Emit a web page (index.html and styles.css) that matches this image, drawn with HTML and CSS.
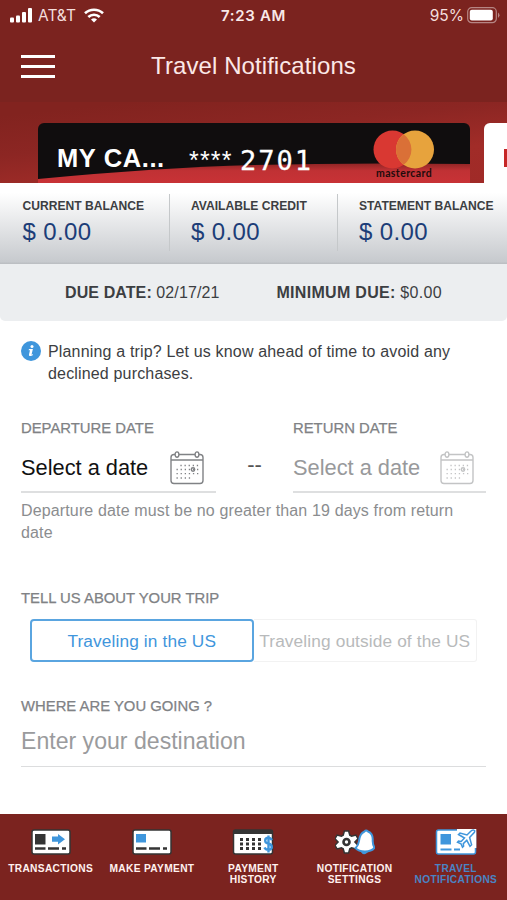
FILE: index.html
```html
<!DOCTYPE html>
<html lang="en">
<head>
<meta charset="utf-8">
<title>Travel Notifications</title>
<link rel="stylesheet" href="styles.css">
</head>
<body>
<svg width="0" height="0" class="defs" aria-hidden="true">
  <symbol id="calendar" viewBox="0 0 34 34">
    <g fill="none" stroke="currentColor" stroke-width="1.4">
      <path d="M5 3.5H4a3 3 0 0 0-3 3V29.5a3 3 0 0 0 3 3H30a3 3 0 0 0 3-3V6.500a3 3 0 0 0-3-3h-1M9 3.500h16M1 9h32"/>
      <ellipse cx="7" cy="3.600" rx="1.900" ry="2.700"/><ellipse cx="27" cy="3.600" rx="1.900" ry="2.700"/>
      <circle cx="23" cy="18.500" r="1.700"/>
    </g>
    <g stroke="currentColor" stroke-width="1.300" stroke-dasharray="1.300 2.800">
      <path d="M10.400 14.500h19M6.500 18.500h23M6.500 22.700h23M6.500 27h14"/>
    </g>
  </symbol>
</svg>
<div class="screen">
  <header class="top">
    <div class="status">
      <div class="carrier">
        <svg width="23" height="15" viewBox="0 0 23 15" fill="#fff"><rect y="9.500" width="4" height="5" rx="1"/><rect x="6" y="7.500" width="4" height="7" rx="1"/><rect x="12" y="4" width="4" height="10.500" rx="1"/><rect x="18" y="0" width="4" height="14.500" rx="1"/></svg>
        <span class="att">AT&amp;T</span>
        <svg width="20" height="15" viewBox="0 0 20 15" fill="none" stroke="#fff" stroke-width="2.600"><path d="M1 5.300a13 13 0 0 1 18 0M4.300 9a8.300 8.300 0 0 1 11.400 0"/><path d="M10 14.500l-3-3a4.500 4.500 0 0 1 6 0z" fill="#fff" stroke="none"/></svg>
      </div>
      <span class="time">7:23 AM</span>
      <div class="battery"><span>95%</span>
        <svg width="33" height="17" viewBox="0 0 33 17"><rect x=".7" y=".7" width="28.600" height="15" rx="4" fill="none" stroke="#b68583" stroke-width="1.200"/><rect x="2.800" y="2.800" width="23" height="10.600" rx="2" fill="#fff"/><path d="M31 5.500q3 2.700 0 5.400z" fill="#b68583"/></svg>
      </div>
    </div>
    <div class="nav">
      <div class="menu"><i></i><i></i><i></i></div>
      <h1>Travel Notifications</h1>
      <div></div>
    </div>
  </header>

  <section class="cards">
    <div class="card">
      <svg class="card-art" width="432" height="61" viewBox="0 0 432 61" preserveAspectRatio="none">
        <defs><linearGradient id="swoosh" x1="0" y1="0" x2="0" y2="1"><stop offset="0" stop-color="#8f2525"/><stop offset=".35" stop-color="#c03134"/><stop offset="1" stop-color="#c93236"/></linearGradient></defs>
        <path d="M0 56Q120 44.500 216 42T432 41V61H0z" fill="url(#swoosh)"/>
      </svg>
      <span class="card-name">MY CA...</span>
      <span class="stars">****</span>
      <span class="digits">2701</span>
      <div class="brand">
        <svg width="62" height="39" viewBox="0 0 62 39"><circle cx="19.500" cy="19.500" r="19" fill="#d93832"/><circle cx="42" cy="19.500" r="19" fill="#e7a33d"/><path d="M30.700 4.200a19 19 0 0 1 0 30.600a19 19 0 0 1 0-30.600" fill="#da7037"/></svg>
        <span>mastercard</span>
      </div>
    </div>
    <div class="card next"><i></i></div>
  </section>

  <section class="balances">
    <div><b>CURRENT BALANCE</b><span>$ 0.00</span></div>
    <div><b>AVAILABLE CREDIT</b><span>$ 0.00</span></div>
    <div><b>STATEMENT BALANCE</b><span>$ 0.00</span></div>
  </section>
  <section class="due">
    <span><b>DUE DATE:</b> 02/17/21</span>
    <span class="minimum"><b>MINIMUM DUE:</b> $0.00</span>
  </section>

  <main>
    <div class="info">
      <svg width="20" height="20" viewBox="0 0 20 20"><circle cx="10" cy="10" r="10" fill="#3f96dc"/><g fill="#fff"><circle cx="11" cy="5.400" r="1.500"/><path d="M8 8h3.900l-1.400 5.700 1.500-.6-.3 1.100c-1.500 1.200-4.200 1.100-3.700-.8L9 9.300l-1.400-.1z"/></g></svg>
      <p>Planning a trip? Let us know ahead of time to avoid any<br>declined purchases.</p>
    </div>
    <div class="dates">
      <div class="date">
        <label>DEPARTURE DATE</label>
        <div class="field"><span>Select a date</span><svg width="34" height="34"><use href="#calendar"/></svg></div>
      </div>
      <span class="dash">--</span>
      <div class="date off">
        <label>RETURN DATE</label>
        <div class="field"><span>Select a date</span><svg width="34" height="34"><use href="#calendar"/></svg></div>
      </div>
    </div>
    <p class="hint">Departure date must be no greater than 19 days from return<br>date</p>
    <label class="trip">TELL US ABOUT YOUR TRIP</label>
    <div class="segments"><span class="on">Traveling in the US</span><span>Traveling outside of the US</span></div>
    <label class="where">WHERE ARE YOU GOING ?</label>
    <div class="destination"><span>Enter your destination</span></div>
  </main>

  <nav class="tabs">
    <div class="tab"><svg width="40" height="26" viewBox="0 0 40 26"><rect x="1" y="1" width="38" height="24" rx="2" fill="#fff" stroke="#343434" stroke-width="1.500"/><path d="M4 5h10.500v10.500H4z" fill="#343434"/><path d="M21 7.500h6V5l7 5.200-7 5.200v-2.600h-6z" fill="#3f96dc"/><path d="M4 19.500h10.500M17 19.500h11M31 19.500h4" stroke="#343434" stroke-width="2.400"/></svg><span>TRANSACTIONS</span></div>
    <div class="tab"><svg width="40" height="26" viewBox="0 0 40 26"><rect x="1" y="1" width="38" height="24" rx="2" fill="#fff" stroke="#343434" stroke-width="1.500"/><path d="M4 5h10v8.500H4z" fill="#3f96dc"/><path d="M4 19.500h10.500M17 19.500h11M31 19.500h4" stroke="#343434" stroke-width="2.400"/></svg><span>MAKE PAYMENT</span></div>
    <div class="tab"><svg width="42" height="26" viewBox="0 0 42 26"><rect x="1.500" y="1" width="39" height="24" rx="2" fill="#fff" stroke="#343434" stroke-width="1.500"/><path d="M1.500 1h39v4h-39z" fill="#343434"/><path d="M8 10.500h21M8 15h21M8 19.500h21" stroke="#343434" stroke-width="3" stroke-dasharray="3 3"/><path d="M40 11Q38.500 8.800 36.500 8.800c-4.300 0-4.300 5-.5 5.700 5 .8 5 6.300.5 6.300q-3 0-4-2.300M36.500 6.500v17" fill="none" stroke="#3f96dc" stroke-width="2.400"/></svg><span>PAYMENT<br>HISTORY</span></div>
    <div class="tab"><svg width="40" height="26" viewBox="0 0 40 26"><path d="M9.400 2h4.200l1.200 4.200 1.800 1 4.300-1.100 2.100 3.600-3.100 3.300 3.100 3.300-2.100 3.600-4.300-1.100-1.800 1L13.600 24H9.400l-1.200-4.200-1.800-1-4.300 1.100L0 16.300 3.100 13 0 9.700l2.100-3.600 4.300 1.100 1.800-1z" fill="#fff" stroke="#343434" stroke-width="1.500"/><circle cx="11.500" cy="13" r="3" fill="#fff" stroke="#343434" stroke-width="2.600"/><path d="M29.500 2.500Q31 .5 33 2.500c3.700 1.500 5 5 4.700 9-.1 3 .6 5 1.800 7.200-2 2.800-7 3.800-9.500 3.800-3 0-7.500-1-9.500-3.300 2-2 3.200-4.300 3.500-7.200.5-5 2-8 5.500-9.500z" fill="#fff" stroke="#3f96dc" stroke-width="2"/><path d="M27 23q2 3 5 0z" fill="#3f96dc" stroke="#3f96dc" stroke-width="1.500"/></svg><span>NOTIFICATION<br>SETTINGS</span></div>
    <div class="tab active"><svg width="42" height="26" viewBox="0 0 42 26"><rect x="1.500" y="1" width="39" height="24" rx="2" fill="#fff" stroke="#3f96dc" stroke-width="1.500"/><path d="M5.500 5h10.500v10.500H5.500z" fill="#3f96dc"/><path d="M5.500 20.500h11M19 20.500h6" stroke="#3f96dc" stroke-width="2.200"/><path d="M22 0h19.300v19H22z" fill="#fff"/><path d="M39.500 1.500c-1.500-1-3 0-4 1L32 6l-7-2-1.500 1.500 6 3.500-3.300 3.500-2.700-.4-1 1.100 3.500 1.600 1.500 3.400 1.100-1-.3-2.600 3.500-3.300 3.200 6 1.600-1.500-2-7.300 3.200-3.500c1.200-1.200 2.600-2.300 1.700-3.500z" fill="#fff" stroke="#3f96dc" stroke-width="1.500"/></svg><span>TRAVEL<br>NOTIFICATIONS</span></div>
  </nav>
</div>
</body>
</html>
```
FILE: styles.css
```css
* { box-sizing: border-box; }
body { margin: 0; background: #fff; font-family: "Liberation Sans", Arial, sans-serif; color: #3c3e42; }
h1, p { margin: 0; font-weight: 400; }
svg { display: block; flex: none; }
.defs { position: absolute; }
.screen { width: 507px; height: 900px; display: flex; flex-direction: column; overflow: hidden; white-space: nowrap; }
.top { height: 102px; flex: none; background: #7b231f; color: #fff; }
.status { height: 30px; display: grid; grid-template-columns: 1fr auto 1fr; align-items: center; padding: 0 7px 0 10px; font-family: Inter, sans-serif; font-size: 15.500px; color: #f3dedc; }
.carrier { display: flex; align-items: center; gap: 5px; }
.att { width: 41px; }
.time { font-size: 15px; font-weight: 600; letter-spacing: .65px; color: #f9e9e8; margin-left: -3px; }
.battery { display: flex; justify-content: flex-end; align-items: center; gap: 3px; }
.nav { height: 72px; display: grid; grid-template-columns: 1fr auto 1fr; align-items: center; padding: 0 21px; }
.menu { width: 34px; display: flex; flex-direction: column; gap: 7px; padding-top: 1px; }
.menu i { height: 3px; background: #fff; }
h1 { font-size: 24px; letter-spacing: .08px; color: #fbe8e7; }
.cards { height: 81px; flex: none; display: flex; gap: 14px; padding: 21px 0 0 38px; overflow: hidden; background: linear-gradient(174deg, #82231f 10%, #8c2623 40%, #a12c28 70%, #a02a27 100%); }
.card { position: relative; width: 432px; height: 61px; flex: none; border-radius: 6px 6px 0 0; background: #100d0e; overflow: hidden; color: #fff; display: flex; }
.card-art { position: absolute; inset: 0; }
.card > span, .brand { position: relative; }
.card-name { width: 133px; padding: 20px 0 0 19px; font-size: 25.500px; line-height: 30px; font-weight: 700; letter-spacing: .6px; }
.stars { width: 44px; margin-left: 18px; padding-top: 25px; font-size: 25px; line-height: 24px; letter-spacing: 1.200px; }
.digits { width: 80px; margin-left: 7px; padding-top: 23px; font: 27px/30px "DejaVu Sans Mono", monospace; letter-spacing: 2px; -webkit-text-stroke: .3px #fff; }
.brand { width: 62px; margin: 7px 0 0 53px; display: flex; flex-direction: column; align-items: center; color: #1f0b0c; }
.brand span { font: 700 10.500px/11px Lato, sans-serif; letter-spacing: .4px; margin-top: -1px; }
.card.next { width: 100px; background: #fff; padding: 26px 0 0 20px; }
.next i { width: 20px; height: 18px; background: #c62727; }
.balances { height: 81px; flex: none; display: grid; grid-template-columns: 169px 168px 170px; padding-top: 11px; background: linear-gradient(#fff 12%, #c7cace 97%, #b9bcc0); }
.balances div { height: 57px; padding: 3px 0 0 22.500px; }
.balances div + div { border-left: 1px solid #c5c8ca; padding-left: 21px; }
.balances b { display: block; font-size: 12.100px; line-height: 18px; }
.balances span { display: block; font-size: 24px; line-height: 33px; color: #1c3d78; letter-spacing: .35px; }
.due { height: 57px; flex: none; display: flex; align-items: center; padding: 1px 0 0 65px; background: #eceef0; font-size: 16px; letter-spacing: .1px; border-radius: 0 0 5px 5px; }
.minimum { margin-left: 57px; letter-spacing: .3px; }
main { flex: 1; display: flex; flex-direction: column; padding: 0 21px; }
.info { display: flex; gap: 7px; padding-top: 20px; font-size: 16px; line-height: 22px; letter-spacing: .165px; }
label { font-size: 14.850px; line-height: 18px; color: #808285; -webkit-text-stroke: .25px #808285; }
.dates { display: flex; margin-top: 34px; }
.date { width: 195px; }
.date label { display: block; }
.field { display: flex; justify-content: space-between; align-items: flex-start; height: 56px; padding: 14px 12px 0 0; border-bottom: 2px solid #dedfe0; color: #808285; }
.field span { font-size: 21.800px; line-height: 34px; color: #111; }
.off { width: 193px; }
.off .field span { color: #98999b; }
.off .field svg { color: #c3c4c5; }
.dash { width: 77px; text-align: center; padding-top: 34px; font-size: 22px; line-height: 24px; color: #555; }
.hint { margin-top: 7px; font-size: 16px; line-height: 22px; letter-spacing: .14px; color: #8b8d8f; }
.trip { margin-top: 45px; }
.segments { display: flex; margin: 12px 9px 0; height: 43px; }
.segments span { width: 224px; border: 1px solid #f2f2f2; border-left: 0; border-radius: 0 3px 3px 0; text-align: center; font-size: 17.300px; letter-spacing: .12px; line-height: 42px; color: #b8babb; }
.segments .on { border: 2px solid #5aa5e0; border-radius: 4px; line-height: 40px; color: #3f96dc; }
.where { margin-top: 35px; }
.destination { height: 52px; padding-top: 11px; border-bottom: 1px solid #dcddde; font-size: 23.100px; line-height: 30px; color: #9a9b9d; }
.tabs { height: 86px; flex: none; display: grid; grid-template-columns: repeat(5, 101.300px); padding-top: 15px; background: #7b231f; }
.tab { display: flex; flex-direction: column; align-items: center; text-align: center; color: #fff1ef; font-size: 10.200px; line-height: 11px; font-weight: 700; letter-spacing: .33px; }
.tab span { margin-top: 8px; }
.active { color: #4a83c4; }
```
